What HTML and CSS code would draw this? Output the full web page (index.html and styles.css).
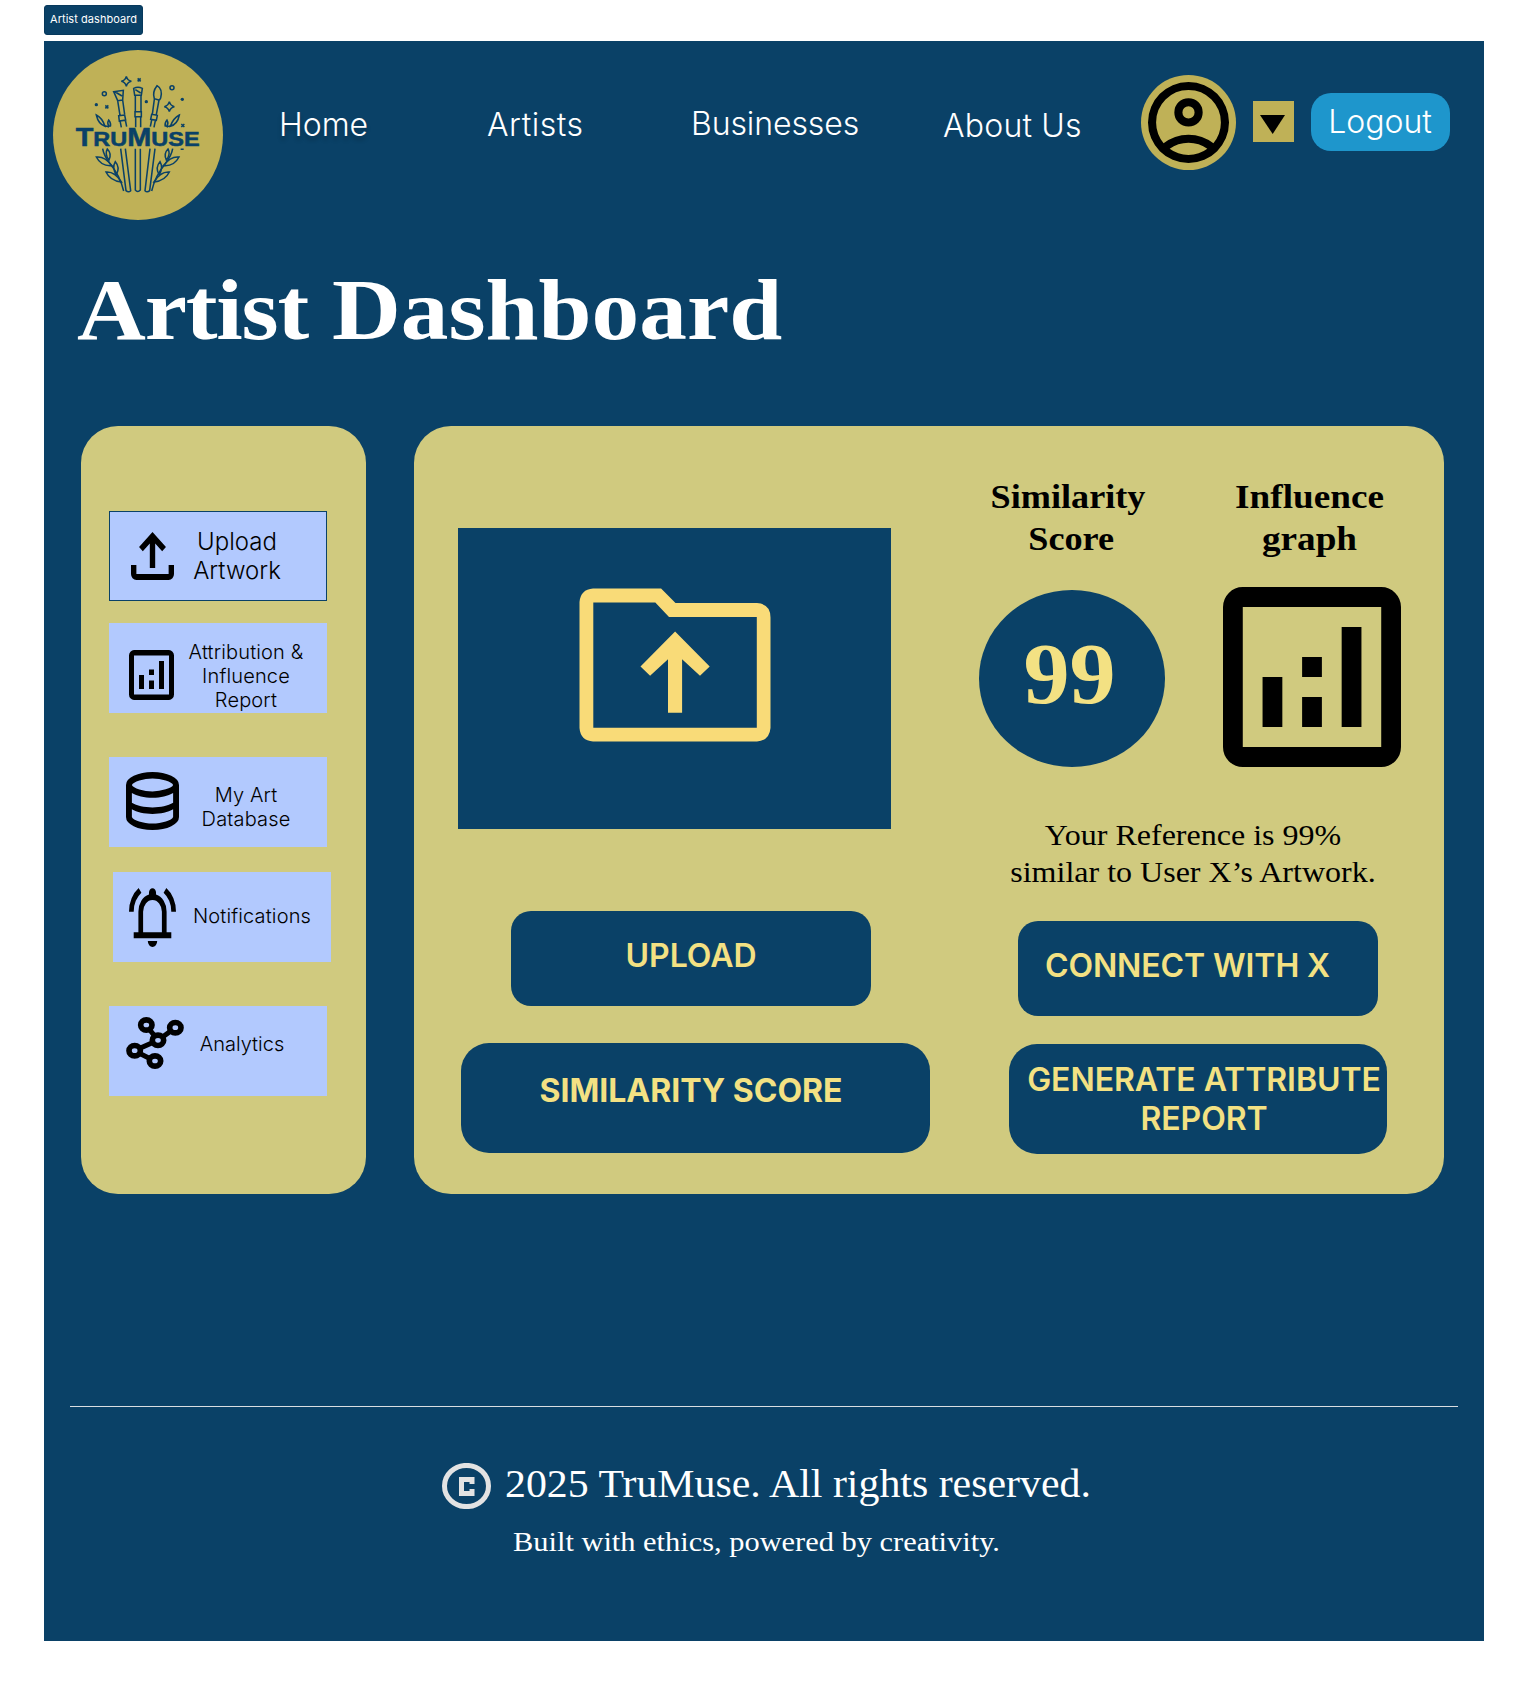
FILE: index.html
```html
<!DOCTYPE html>
<html lang="en">
<head>
<meta charset="utf-8">
<title>Artist dashboard</title>
<link rel="stylesheet" href="styles.css">
</head>
<body>
<div class="tag">Artist dashboard</div>
<div class="frame">
  <header class="header">
    <svg class="logo" viewBox="39 150 510 510" role="img" aria-label="TruMuse">
      <circle class="logo-disc" cx="294" cy="405" r="255"/>
      <g class="logo-lines">
        <path d="M259 229q3 12 15 15q-12 3-15 15q-3-12-15-15q12-3 15-15zM388 305q3 12 15 15q-12 3-15 15q-3-12-15-15q12-3 15-15z"/>
        <circle cx="193" cy="281" r="6"/><circle cx="396" cy="263" r="6"/>
        <path d="M293 235l9 9m0-9l-9 9M196 316l9 9m0-9l-9 9M424 372l9 9m0-9l-9 9"/>
        <path d="M221 275l29-4-2 29-15 2zM226 276l20 12M233 302l7 44M248 300l6 44M236 347l18-2 3 15-19 3zM240 362l4 20M256 360l4 20"/>
        <path d="M281 265q13-6 26 0l-3 21h-20zM286 269l16 10M286 286v48M303 286v48M285 335h19v15h-19zM287 350v32M302 350v32"/>
        <path d="M343 296q-7-20 8-39q18 10 11 37q-2 6-6 6zM343 298l-6 45M357 300l-8 44M335 343l17 3-3 15-17-3zM335 360l-4 20M346 362l-4 20"/>
        <path d="M169 345q18 9 26 34q-20-7-26-34zM194 377q10 1 13 5M208 380q-8-9-2-20q8 9 5 20M418 345q-18 9-27 34q22-7 27-34zM393 377q-10 1-13 5M379 380q8-9 2-20q-8 9-5 20"/>
        <path d="M242 446l16 126q8 7 14 0L256 446M286 446v124q7 9 15 0V446M345 446l-16 126q-8 7-14 0L330 446"/>
        <path d="M188 446q3 20 22 45q30 35 41 82M398 446q-3 20-22 45q-30 35-41 82"/>
        <path d="M169 471q25-3 47 26q-32 3-47-26zM198 516q27-2 46 30q-34-4-46-30zM207 480q-14-17-5-33q14 14 5 33zM229 524q-14-20-3-39q15 17 3 39z"/>
        <path d="M417 471q-25-3-47 26q32 3 47-26zM388 516q-27-2-46 30q34-4 46-30zM379 480q14-17 5-33q-14 14-5 33zM357 524q14-20 3-39q-15 17-3 39zM422 448h9"/>
      </g>
      <g class="logo-dots"><circle cx="169" cy="314" r="5"/><circle cx="319" cy="305" r="5"/><circle cx="427" cy="298" r="5"/></g>
      <text class="logo-word" x="107" y="437" textLength="372" lengthAdjust="spacingAndGlyphs"><tspan class="logo-cap">T</tspan>RU<tspan class="logo-cap">M</tspan>USE</text>
    </svg>
    <nav class="nav">
      <a class="nav-link nav-link-current">Home</a>
      <a class="nav-link nav-link-artists">Artists</a>
      <a class="nav-link nav-link-businesses">Businesses</a>
      <a class="nav-link nav-link-about">About Us</a>
    </nav>
    <div class="avatar">
      <svg class="avatar-icon" viewBox="2 2 20 20"><path d="M5.85 17.1q1.275-.975 2.85-1.538T12 15t3.3.563t2.85 1.537q.875-1.025 1.363-2.325T20 12q0-3.325-2.337-5.663T12 4T6.337 6.338T4 12q0 1.475.488 2.775T5.85 17.1M12 13q-1.475 0-2.488-1.012T8.5 9.5t1.013-2.488T12 6t2.488 1.013T15.5 9.5t-1.012 2.488T12 13m0 9q-2.075 0-3.9-.788t-3.175-2.137T2.788 15.9T2 12t.788-3.9t2.137-3.175T8.1 2.788T12 2t3.9.788t3.175 2.137T21.213 8.1T22 12t-.788 3.9t-2.137 3.175t-3.175 2.138T12 22m0-2q1.325 0 2.5-.387t2.15-1.113q-.975-.725-2.15-1.112T12 17t-2.5.388T7.35 18.5q.975.725 2.15 1.113T12 20m0-9q.65 0 1.075-.425T13.5 9.5t-.425-1.075T12 8t-1.075.425T10.5 9.5t.425 1.075T12 11"/></svg>
    </div>
    <div class="menu-toggle"><svg class="caret" viewBox="0 0 25 19"><path d="M0 0h25L12.7 19z"/></svg></div>
    <button class="logout">Logout</button>
  </header>

  <h1 class="title"><span class="title-first">Artist</span> Dashboard</h1>

  <main class="content">
    <aside class="sidebar">
      <div class="item item-upload">
        <svg class="icon-upload" viewBox="4 4 16 16" preserveAspectRatio="none"><path d="M11 16V7.85l-2.6 2.6L7 9l5-5 5 5-1.4 1.45-2.6-2.6V16zM6 20q-.825 0-1.412-.587T4 18v-3h2v3h12v-3h2v3q0 .825-.587 1.413T18 20z"/></svg>
        <span class="item-label">Upload<br>Artwork</span>
      </div>
      <div class="item item-report">
        <svg class="icon-report" viewBox="3 3 18 18" preserveAspectRatio="none"><path d="M7 12h2v5H7zM15 7h2v10h-2zM11 14h2v3h-2zM11 10h2v2h-2zM5 21q-.825 0-1.412-.587T3 19V5q0-.825.588-1.412T5 3h14q.825 0 1.413.588T21 5v14q0 .825-.587 1.413T19 21zM5 19h14V5H5z" fill-rule="evenodd"/></svg>
        <span class="item-label">Attribution &amp;<br>Influence<br>Report</span>
      </div>
      <div class="item item-database">
        <svg class="icon-database" viewBox="3 3 18 18" preserveAspectRatio="none"><path d="M12 21q-3.775 0-6.387-1.162T3 17V7q0-1.65 2.638-2.825T12 3t6.363 1.175T21 7v10q0 1.675-2.613 2.838T12 21m0-11.975q2.225 0 4.475-.638T19 7.025q-.275-.725-2.512-1.375T12 5q-2.275 0-4.462.638T5 7.025q.35.75 2.538 1.375T12 9.025M12 14q1.05 0 2.025-.1t1.863-.288t1.675-.462T19 12.525v-3q-.65.35-1.437.625t-1.675.463t-1.863.287T12 11t-2.05-.1t-1.888-.288T6.4 10.15T5 9.525v3q.625.35 1.4.625t1.663.463t1.887.287T12 14m0 5q1.15 0 2.338-.175t2.187-.462t1.675-.65t.8-.738v-2.45q-.65.35-1.437.625t-1.675.463t-1.863.287T12 16t-2.05-.1t-1.888-.288T6.4 15.15T5 14.525V17q.125.375.788.725t1.662.638t2.2.462T12 19"/></svg>
        <span class="item-label">My Art<br>Database</span>
      </div>
      <div class="item item-notifications">
        <svg class="icon-bell" viewBox="2 1.95 20 20.05" preserveAspectRatio="none"><path d="M2 10q0-2.5 1.113-4.587T6.1 1.95l1.175 1.6q-1.5 1.1-2.387 2.775T4 10zm18 0q0-2-.888-3.675T16.726 3.55L17.9 1.95q1.875 1.375 2.988 3.463T22 10zM4 19v-2h2v-7q0-2.075 1.25-3.687T10.5 4.2v-.7q0-.625.438-1.062T12 2t1.063.438T13.5 3.5v.7q2 .5 3.25 2.113T18 10v7h2v2zm8 3q-.825 0-1.412-.587T10 20h4q0 .825-.587 1.413T12 22m-4-5h8v-7q0-1.65-1.175-2.825T12 6T9.175 7.175T8 10z"/></svg>
        <span class="item-label">Notifications</span>
      </div>
      <div class="item item-analytics">
        <svg class="icon-network" viewBox="168 650 174 156">
          <path d="M228 674l36 46 52-38M264 720l-71 31 61 31"/>
          <g class="nodes"><ellipse cx="229" cy="674" rx="17" ry="15.500"/><ellipse cx="316" cy="682" rx="17" ry="15.500"/><ellipse cx="264" cy="720" rx="17" ry="15.500"/><ellipse cx="194" cy="751" rx="17" ry="15.500"/><ellipse cx="255" cy="782" rx="17" ry="15.500"/></g>
        </svg>
        <span class="item-label">Analytics</span>
      </div>
    </aside>

    <section class="panel">
      <div class="upload-column">
        <div class="dropzone">
          <svg class="folder" viewBox="-.5 -.5 192 154"><path fill-rule="evenodd" d="M13.5 0H81.6L96 14.5H177.5Q191 15.5 191 29V139.500Q190 152 177.500 153H13.500Q1 152 0 139.500V13.500Q1 1 13.500 0zM13.800 14V139.300H177.300V28.500H89.500L75.800 14z"/><path d="M95.600 43L130.200 78l-9.700 9.300-17.900-16.600V124.300H88.500V70.700L70.600 87.300 61 78z"/></svg>
        </div>
        <button class="btn btn-small btn-upload">UPLOAD</button>
        <button class="btn btn-large btn-similarity">SIMILARITY SCORE</button>
      </div>
      <div class="result-column">
        <div class="metrics">
          <div class="metric metric-score">
            <h2 class="metric-title">Similarity<br><span class="metric-word">Score</span></h2>
            <div class="score"><span class="score-value">99</span></div>
          </div>
          <div class="metric metric-graph">
            <h2 class="metric-title">Influence<br>graph</h2>
            <svg class="graph" viewBox="3 3 18 18" preserveAspectRatio="none"><path d="M7 12h2v5H7zM15 7h2v10h-2zM11 14h2v3h-2zM11 10h2v2h-2zM5 21q-.825 0-1.412-.587T3 19V5q0-.825.588-1.412T5 3h14q.825 0 1.413.588T21 5v14q0 .825-.587 1.413T19 21zM5 19h14V5H5z" fill-rule="evenodd"/></svg>
          </div>
        </div>
        <p class="summary">Your Reference is 99%<br>similar to User X’s Artwork.</p>
        <button class="btn btn-small btn-connect">CONNECT WITH X</button>
        <button class="btn btn-large btn-generate">GENERATE ATTRIBUTE<br>REPORT</button>
      </div>
    </section>
  </main>

  <footer class="footer">
    <div class="copyright">
      <svg class="copyright-icon" viewBox="0 0 49 46"><ellipse cx="24.500" cy="23" rx="22" ry="20.600"/><path d="M30 21V16.500H19.500V30.500H30V26"/></svg>
      <span class="copyright-text">2025 TruMuse. All rights reserved.</span>
    </div>
    <p class="tagline">Built with ethics, powered by creativity.</p>
  </footer>
</div>
</body>
</html>
```
FILE: styles.css
```css
:root {
  --navy: #0a4167;
  --gold: #bfb157;
  --panel: #d0ca7f;
  --item: #b2c9fe;
  --cream: #f3e183;
  --serif: "Liberation Serif", serif;
}

* { box-sizing: border-box; }

body {
  margin: 0;
  padding: 5px 0 0 44px;
  background: #fff;
  font-family: Inter, sans-serif;
}

svg { display: block; flex: none; }
h1, h2, p { margin: 0; }
button { border: 0; padding: 0; font-family: inherit; }

.tag {
  width: 99px;
  height: 30px;
  margin-bottom: 6px;
  border: 1px solid #07395c;
  border-radius: 3px;
  background: var(--navy);
  color: #fff;
  font-size: 11px;
  letter-spacing: .05px;
  line-height: 27px;
  text-align: center;
}

.frame {
  width: 1440px;
  height: 1600px;
  padding-top: 9px;
  background: var(--navy);
}

/* Header */
.header {
  display: flex;
  align-items: flex-start;
  height: 170px;
  padding-left: 9px;
}

.logo { width: 170px; height: 170px; }
.logo-disc { fill: var(--gold); }
.logo-lines { fill: none; stroke: var(--navy); stroke-width: 4.6; }
.logo-dots { fill: var(--navy); }
.logo-word {
  fill: var(--navy);
  stroke: var(--navy);
  stroke-width: 1.5;
  font: bold 61px "Liberation Sans", sans-serif;
}
.logo-cap { font-size: 75px; }

.nav {
  display: grid;
  grid-template-columns: 208px 204px 252px 198px;
  width: 862px;
  margin: 55px 0 0 56px;
}
.nav-link {
  color: #fff;
  font-size: 32px;
  font-weight: 300;
  line-height: 39px;
  white-space: nowrap;
}
.nav-link-current { text-shadow: 0 4px 4px rgba(0, 0, 0, .25); }
.nav-link-artists { letter-spacing: .55px; }
.nav-link-businesses { margin-top: -1px; letter-spacing: -.1px; }
.nav-link-about { margin-top: 1px; letter-spacing: .2px; }

.avatar {
  display: flex;
  align-items: center;
  justify-content: center;
  width: 95px;
  height: 95px;
  margin-top: 25px;
  border-radius: 50%;
  background: var(--gold);
}
.avatar-icon { width: 81px; height: 81px; }

.menu-toggle {
  width: 41px;
  height: 41px;
  margin: 51px 17px 0;
  padding: 14px 0 0 7px;
  background: var(--gold);
}
.caret { width: 25px; height: 19px; }

.logout {
  width: 139px;
  height: 58px;
  margin-top: 43px;
  padding: 0 1px 1px 0;
  border-radius: 20px;
  background: #1e96cc;
  color: #fff;
  font-size: 32px;
  font-weight: 300;
}

.title {
  width: 700px;
  height: 100px;
  margin: 40px 0 0 33px;
  color: #fff;
  font: bold 87px/100px var(--serif);
  white-space: nowrap;
  transform: scaleX(1.096);
  transform-origin: left;
}
.title-first { letter-spacing: -1.100px; }

/* Dashboard */
.content {
  display: flex;
  gap: 48px;
  margin: 66px 0 0 37px;
}

.sidebar {
  width: 285px;
  height: 768px;
  padding: 85px 0 0 28px;
  border-radius: 37px;
  background: var(--panel);
}
.item {
  display: flex;
  align-items: flex-start;
  width: 218px;
  height: 90px;
  background: var(--item);
  color: #000;
  font-size: 20px;
  font-weight: 300;
  letter-spacing: .15px;
  line-height: 24px;
}
.item-label { text-align: center; white-space: nowrap; }

.item-upload { border: 1px solid var(--navy); font-size: 24px; line-height: 29px; letter-spacing: 0; }
.item-upload .item-label { width: 100px; margin: 15px 0 0 13px; }
.icon-upload { width: 43px; height: 48px; margin: 20px 0 0 21px; }

.item-report { margin-top: 22px; }
.item-report .item-label { width: 130px; margin: 17px 0 0 7px; }
.icon-report { width: 45px; height: 50px; margin: 27px 0 0 20px; }

.item-database { margin-top: 44px; }
.item-database .item-label { width: 100px; margin: 26px 0 0 17px; }
.icon-database { width: 53px; height: 58px; margin: 15px 0 0 17px; }

.item-notifications { margin: 25px 0 0 4px; }
.item-notifications .item-label { width: 130px; margin: 32px 0 0 11px; }
.icon-bell { width: 47px; height: 59px; margin: 16px 0 0 16px; }

.item-analytics { margin-top: 43.500px; letter-spacing: 0; }
.item-analytics .item-label { width: 100px; margin: 26px 0 0 8px; }
.icon-network {
  width: 58px;
  height: 52px;
  margin: 11px 0 0 17px;
  fill: none;
  stroke: #000;
  stroke-width: 15;
}
.nodes { fill: var(--item); stroke-width: 17; }

.panel {
  display: flex;
  width: 1030px;
  height: 768px;
  padding-left: 44px;
  border-radius: 37px;
  background: var(--panel);
}
.upload-column { width: 551px; padding-top: 102px; }
.dropzone {
  width: 433px;
  height: 301px;
  padding: 60px 0 0 121px;
  background: var(--navy);
}
.folder { width: 192px; height: 154px; fill: #f9db78; }

.btn {
  display: block;
  background: var(--navy);
  color: var(--cream);
  font-size: 32px;
  font-weight: 600;
  line-height: 39px;
  white-space: nowrap;
}
.btn-small { width: 360px; height: 95px; border-radius: 20px; }
.btn-large { height: 110px; border-radius: 28px; }
.btn-upload { margin: 82px 0 0 53px; padding-bottom: 6px; }
.btn-similarity { width: 469px; margin: 37px 0 0 3px; padding: 0 9px 16px 0; font-weight: 700; }
.btn-connect { margin: 28px 0 0 9px; padding: 0 21px 6px 0; letter-spacing: -.1px; }
.btn-generate { width: 378px; margin: 28px 0 0; padding: 0 0 0 12px; letter-spacing: -.05px; }

.result-column { width: 400px; padding-top: 49px; }
.metrics { display: flex; height: 292px; }
.metric-title {
  padding-top: 1px;
  font: bold 34px/42px var(--serif);
  text-align: center;
  transform: scaleX(1.065);
}
.metric-word { margin-left: 6px; }
.metric-score { width: 186px; margin-left: -30px; }
.metric-graph { width: 178px; margin-left: 58px; }
.metric-graph .metric-title { margin-right: 5px; transform: scaleX(1.095); }
.metric-score .metric-title { margin-right: 8px; }
.score {
  width: 186px;
  height: 177px;
  margin-top: 30px;
  padding-right: 5px;
  border-radius: 50%;
  background: var(--navy);
  color: var(--cream);
  font: bold 87px/167px var(--serif);
  text-align: center;
}
.score-value { display: inline-block; transform: scaleX(1.06); }
.graph { width: 178px; height: 180px; margin-top: 27px; }
.summary {
  width: 368px;
  height: 126px;
  padding-top: 50px;
  font: 29px/37px var(--serif);
  text-align: center;
  white-space: nowrap;
  transform: scaleX(1.104);
}

/* Footer */
.footer {
  width: 1388px;
  margin: 212px 0 0 26px;
  padding-top: 56px;
  border-top: 1px solid #d9dde1;
  color: #fff;
  font-family: var(--serif);
}
.copyright { display: flex; height: 48px; padding-left: 372px; }
.copyright-icon {
  width: 49px;
  height: 46px;
  fill: none;
  stroke: #e3e3e3;
  stroke-width: 5;
}
.copyright-text {
  margin: -2px 0 0 14px;
  font-size: 39px;
  line-height: 46px;
  white-space: nowrap;
  transform: scaleX(1.073);
  transform-origin: left;
}
.tagline {
  width: 450px;
  margin: 15px 0 0 443px;
  font-size: 28px;
  line-height: 32px;
  white-space: nowrap;
  transform: scaleX(1.086);
  transform-origin: left;
}
```
